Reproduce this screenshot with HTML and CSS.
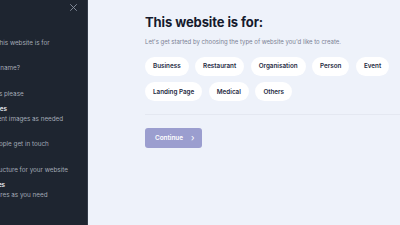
FILE: index.html
```html
<!DOCTYPE html>
<html>
<head>
<meta charset="utf-8">
<link rel="stylesheet" href="styles.css">
</head>
<body>
<div class="page">
  <aside class="drawer">
    <div class="drawer-top">
      <button class="close" aria-label="Close">
        <svg width="7" height="7" viewBox="0 0 7 7"><path d="M0.5 0.5L6.5 6.5M6.5 0.5L0.5 6.5" stroke="#8b93a1" stroke-width="0.9" stroke-linecap="round"/></svg>
      </button>
    </div>
    <ol class="steps">
      <li class="step"><span class="step-title">Purpose</span><span class="step-desc">Define what this website is for</span></li>
      <li class="step"><span class="step-title">Name</span><span class="step-desc">Your product name?</span></li>
      <li class="step"><span class="step-title">Details</span><span class="step-desc">Project details please</span></li>
      <li class="step"><span class="step-title">Choose images</span><span class="step-desc">Replace current images as needed</span></li>
      <li class="step"><span class="step-title">Contact</span><span class="step-desc">State how people get in touch</span></li>
      <li class="step"><span class="step-title">Structure</span><span class="step-desc">Arrange a structure for your website</span></li>
      <li class="step"><span class="step-title">Website pages</span><span class="step-desc">Add the features as you need</span></li>
    </ol>
  </aside>
  <main class="main">
    <h1 class="title">This website is for:</h1>
    <p class="subtitle">Let's get started by choosing the type of website you'd like to create.</p>
    <div class="chips">
      <button class="chip">Business</button>
      <button class="chip">Restaurant</button>
      <button class="chip">Organisation</button>
      <button class="chip">Person</button>
      <button class="chip">Event</button>
      <button class="chip">Landing Page</button>
      <button class="chip">Medical</button>
      <button class="chip">Others</button>
    </div>
    <hr class="divider">
    <button class="continue">Continue <span class="chev">›</span></button>
  </main>
</div>
</body>
</html>
```

FILE: styles.css
```css
* { box-sizing: border-box; }
html, body { margin: 0; padding: 0; }
body {
  width: 400px;
  height: 225px;
  overflow: hidden;
  font-family: Inter, "Noto Sans", sans-serif;
  background: #eef2fa;
}
.page {
  display: flex;
  height: 225px;
}
.drawer {
  width: 88px;
  flex: none;
  background: #1e2530;
  border-right: 1px solid #343c49;
  overflow: hidden;
  display: flex;
  flex-direction: column;
}
.drawer-top {
  display: flex;
  justify-content: flex-end;
  padding: 4px 10px 0 0;
  height: 29px;
}
.close {
  border: 0;
  background: none;
  padding: 0;
  width: 7px;
  height: 7px;
  display: flex;
}
.steps {
  list-style: none;
  margin: 0 0 0 -40px;
  padding: 0;
  display: flex;
  flex-direction: column;
  gap: 6px;
  white-space: nowrap;
}
.step {
  display: flex;
  flex-direction: column;
  font-size: 6.3px;
  line-height: 9.7px;
}
.step-title {
  color: #e6e9ee;
  font-weight: 600;
}
.step-desc {
  color: #a3aab6;
}
.main {
  flex: 1;
  padding: 14px 0 0 57px;
}
.title {
  margin: 0;
  font-size: 13px;
  line-height: 16px;
  font-weight: 700;
  color: #151a2d;
  letter-spacing: -0.1px;
}
.subtitle {
  margin: 7px 0 0;
  font-size: 6px;
  line-height: 9px;
  color: #7b8194;
}
.chips {
  display: flex;
  flex-wrap: wrap;
  gap: 6.5px;
  margin-top: 10.5px;
  width: 250px;
}
.chip {
  border: 0;
  background: #ffffff;
  border-radius: 10px;
  height: 19px;
  padding: 0 8px;
  font-family: inherit;
  font-size: 6.3px;
  font-weight: 600;
  color: #262a3f;
}
.divider {
  border: 0;
  border-top: 1px solid #e4e8f1;
  margin: 13px 0 0;
}
.continue {
  margin-top: 12.5px;
  width: 57px;
  height: 20px;
  border: 0;
  border-radius: 3px;
  background: #9b9ecf;
  color: #ffffff;
  font-family: inherit;
  font-size: 6.4px;
  font-weight: 600;
  display: flex;
  align-items: center;
  gap: 8px;
  padding: 0 0 0 10px;
}
.chev {
  font-size: 9px;
  font-weight: 400;
  line-height: 1;
  margin-top: -1px;
}
```
